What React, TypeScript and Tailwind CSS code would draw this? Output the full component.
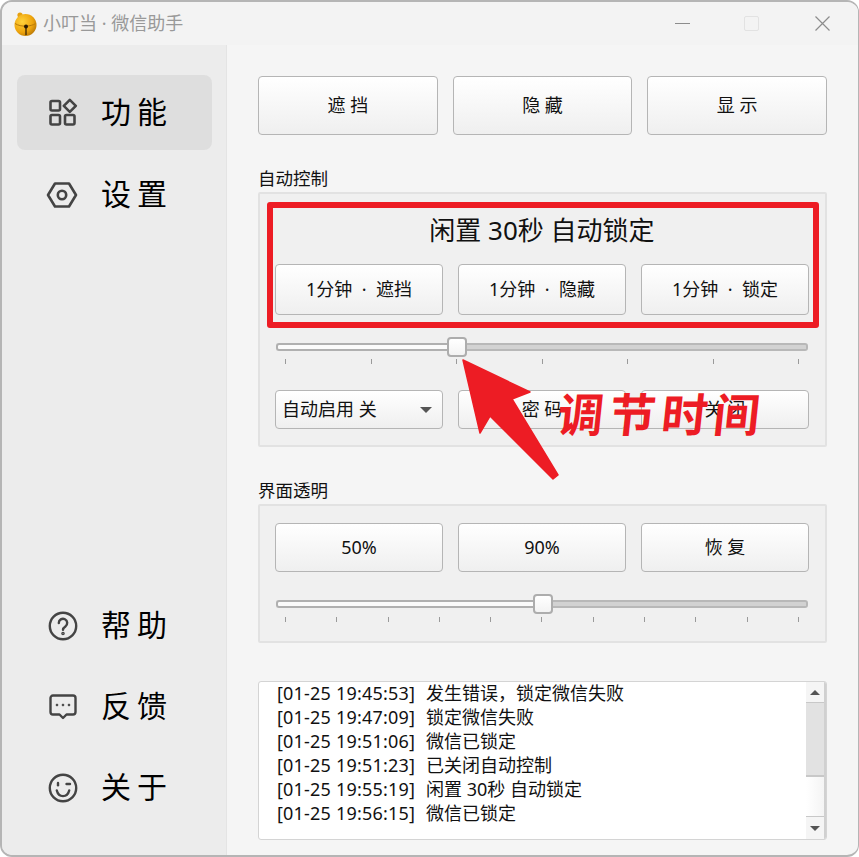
import type { ReactNode } from "react";

const FONT = "font-['Noto_Sans','Noto_Sans_CJK_SC',sans-serif]";

function GridIcon() {
  return (
    <svg width="30" height="30" viewBox="0 0 30 30" fill="none" stroke="#444" strokeWidth="2.6" strokeLinejoin="round">
      <rect x="2.5" y="3" width="9.5" height="9.5" rx="1.5" />
      <rect x="2.5" y="17" width="9.5" height="9.5" rx="1.5" />
      <rect x="17" y="17" width="9.5" height="9.5" rx="1.5" />
      <path d="M21.8 1.8 27.8 7.8 21.8 13.8 15.8 7.8Z" />
    </svg>
  );
}

function HexIcon() {
  return (
    <svg width="32" height="30" viewBox="0 0 32 30" fill="none" stroke="#444" strokeWidth="2.6" strokeLinejoin="round" className="-ml-[2px]">
      <path d="M9 3.5H23L30 15 23 26.5H9L2 15Z" />
      <circle cx="16" cy="15" r="4.2" />
    </svg>
  );
}

function HelpIcon() {
  return (
    <svg width="30" height="30" viewBox="0 0 30 30" fill="none" stroke="#444" strokeWidth="2.4" strokeLinecap="round">
      <circle cx="15" cy="15" r="13.2" />
      <path d="M10.8 12a4.2 4.2 0 1 1 6.6 3.4c-1.5 1-2.4 1.7-2.4 3.4" />
      <circle cx="15" cy="22.5" r="0.6" fill="#444" />
    </svg>
  );
}

function ChatIcon() {
  return (
    <svg width="30" height="30" viewBox="0 0 30 30" fill="none" stroke="#444" strokeWidth="2.4" strokeLinejoin="round">
      <path d="M5 3.5H25a2.5 2.5 0 0 1 2.5 2.5V20a2.5 2.5 0 0 1-2.5 2.5H18.5L15 26l-3.5-3.5H5A2.5 2.5 0 0 1 2.5 20V6A2.5 2.5 0 0 1 5 3.5Z" />
      <circle cx="9" cy="13" r="0.9" fill="#444" strokeWidth="1" />
      <circle cx="15" cy="13" r="0.9" fill="#444" strokeWidth="1" />
      <circle cx="21" cy="13" r="0.9" fill="#444" strokeWidth="1" />
    </svg>
  );
}

function SmileIcon() {
  return (
    <svg width="30" height="30" viewBox="0 0 30 30" fill="none" stroke="#444" strokeWidth="2.4" strokeLinecap="round">
      <circle cx="15" cy="15" r="13.2" />
      <path d="M10 10v2.2" />
      <path d="M18.5 11h3.5" />
      <path d="M8.8 17.5c1 4 3.6 5.6 6.2 5.6s5.2-1.6 6.2-5.6" />
    </svg>
  );
}

function Bell() {
  return (
    <svg width="24" height="26" viewBox="0 0 24 26">
      <defs>
        <radialGradient id="bell" cx="0.35" cy="0.35" r="0.8">
          <stop offset="0" stopColor="#ffd23c" />
          <stop offset="0.6" stopColor="#eea40c" />
          <stop offset="1" stopColor="#a86a05" />
        </radialGradient>
      </defs>
      <circle cx="7" cy="4" r="2.6" fill="#e6a010" />
      <circle cx="12.5" cy="14" r="11" fill="url(#bell)" />
      <path d="M2 12.5c3 2 7 2.8 11 2.6s7-1 9.4-2.4" fill="none" stroke="#b87a08" strokeWidth="1" />
      <circle cx="13" cy="15.5" r="2" fill="#2a1a05" />
      <path d="M13 16v8" stroke="#2a1a05" strokeWidth="1.2" />
    </svg>
  );
}

function NavItem({ icon, label, active }: { icon: ReactNode; label: string; active?: boolean }) {
  return (
    <div className={"flex h-[75px] items-center rounded-lg pl-[31px] " + (active ? "bg-[#dedede]" : "")}>
      <div className="flex w-[53px] shrink-0 items-center">{icon}</div>
      <span className="-mt-[2px] text-[30px] tracking-[6px] text-black">{label}</span>
    </div>
  );
}

function Btn({ children, className }: { children: ReactNode; className: string }) {
  return (
    <div
      className={
        "flex items-center justify-center rounded border-[1.5px] border-[#b5b5b5] bg-gradient-to-b from-white to-[#efefef] text-[18px] text-[#111] " +
        className
      }
    >
      <span className="-mt-px">{children}</span>
    </div>
  );
}

function Slider({ filled, ticks, tickGap }: { filled: number; ticks: number; tickGap: string }) {
  return (
    <div>
      <div className="flex h-5 items-center pl-px pr-px">
        <div className="h-[8px] rounded-l-[3px] border-2 border-r-0 border-[#b0b0b0] bg-[#fbfbfb]" style={{ width: filled }} />
        <div className="z-10 h-5 w-5 shrink-0 rounded-[4px] border-2 border-[#adadad] bg-gradient-to-b from-white to-[#f3f3f3]" />
        <div className="h-[8px] flex-1 rounded-r-[3px] border-2 border-l-0 border-[#b8b8b8] bg-[#d2d2d2]" />
      </div>
      <div className={"flex justify-between px-[10px] " + tickGap}>
        {Array.from({ length: ticks }).map((_, i) => (
          <div key={i} className="h-[5px] w-px bg-[#9a9a9a]" />
        ))}
      </div>
    </div>
  );
}

const logs = [
  ["[01-25 19:45:53]", "发生错误，锁定微信失败"],
  ["[01-25 19:47:09]", "锁定微信失败"],
  ["[01-25 19:51:06]", "微信已锁定"],
  ["[01-25 19:51:23]", "已关闭自动控制"],
  ["[01-25 19:55:19]", "闲置 30秒 自动锁定"],
  ["[01-25 19:56:15]", "微信已锁定"],
];

export default function App() {
  return (
    <div className={"relative h-[857px] w-[859px] overflow-hidden bg-white " + FONT}>
      <div className="flex h-full flex-col overflow-hidden rounded-[12px] border-2 border-r border-[#b5b5b5] bg-[#f5f5f5]">
        {/* title bar */}
        <div className="flex h-[43px] shrink-0 items-center bg-[#f3f3f3] pl-[11px]">
          <Bell />
          <span className="-mt-px ml-[6px] text-[18px] text-[#999]">小叮当 · 微信助手</span>
          <div className="ml-auto flex items-center pr-[28px]">
            <div className="h-px w-[15px] bg-[#8c8c8c]" />
            <div className="ml-[54px] h-[15px] w-[15px] rounded-[2px] border border-[#e2e2e2]" />
            <svg className="ml-[56px]" width="15" height="15" viewBox="0 0 15 15" stroke="#8c8c8c" strokeWidth="1.2">
              <path d="M0.5 0.5 14.5 14.5M14.5 0.5 0.5 14.5" />
            </svg>
          </div>
        </div>

        <div className="flex min-h-0 flex-1">
          {/* sidebar */}
          <div className="flex w-[225px] shrink-0 flex-col justify-between border-r border-[#e4e4e4] bg-[#ececec] pb-[30px] pl-[15px] pr-[14px] pt-[30px]">
            <div className="flex flex-col gap-[7px]">
              <NavItem active icon={<GridIcon />} label="功能" />
              <NavItem icon={<HexIcon />} label="设置" />
            </div>
            <div className="flex flex-col gap-[6px]">
              <NavItem icon={<HelpIcon />} label="帮助" />
              <NavItem icon={<ChatIcon />} label="反馈" />
              <NavItem icon={<SmileIcon />} label="关于" />
            </div>
          </div>

          {/* main */}
          <div className="flex flex-1 flex-col pl-[31px] pr-[31px] pt-[31px]">
            <div className="grid grid-cols-3 gap-[15px]">
              <Btn className="h-[59px]">遮 挡</Btn>
              <Btn className="h-[59px]">隐 藏</Btn>
              <Btn className="h-[59px]">显 示</Btn>
            </div>

            <div className="mt-[30px] h-[27px] text-[17.5px] leading-[27px] text-[#111]">自动控制</div>
            <div className="h-[255px] rounded-[2px] border-2 border-[#e2e2e2] bg-[#f0f0f0] pl-[15px] pr-[16px]">
              <div className="flex h-[70px] items-center justify-center pt-[2px] text-[26px] text-[#111]">闲置 30秒 自动锁定</div>
              <div className="grid grid-cols-3 gap-[15px]">
                <Btn className="h-[51px]">1分钟 &nbsp;·&nbsp; 遮挡</Btn>
                <Btn className="h-[51px]">1分钟 &nbsp;·&nbsp; 隐藏</Btn>
                <Btn className="h-[51px]">1分钟 &nbsp;·&nbsp; 锁定</Btn>
              </div>
              <div className="mt-[22px]">
                <Slider filled={171} ticks={7} tickGap="mt-[2px]" />
              </div>
              <div className="mt-[26px] grid grid-cols-3 gap-[15px]">
                <div className="flex h-[39px] items-center justify-between rounded border-[1.5px] border-[#b5b5b5] bg-gradient-to-b from-white to-[#efefef] pl-[6px] pr-[10px] text-[18px] text-[#111]">
                  <span className="-mt-px">自动启用 关</span>
                  <div className="h-0 w-0 border-x-[6px] border-t-[6px] border-x-transparent border-t-[#555]" />
                </div>
                <Btn className="h-[39px]">密 码</Btn>
                <Btn className="h-[39px]">关 闭</Btn>
              </div>
            </div>

            <div className="mt-[30px] h-[27px] text-[17.5px] leading-[27px] text-[#111]">界面透明</div>
            <div className="h-[139px] rounded-[2px] border-2 border-[#e2e2e2] bg-[#f0f0f0] pl-[15px] pr-[16px] pt-[17px]">
              <div className="grid grid-cols-3 gap-[15px]">
                <Btn className="h-[49px]">50%</Btn>
                <Btn className="h-[49px]">90%</Btn>
                <Btn className="h-[49px]">恢 复</Btn>
              </div>
              <div className="mt-[22px]">
                <Slider filled={257} ticks={11} tickGap="mt-[3px]" />
              </div>
            </div>

            {/* log */}
            <div className="mt-[38px] flex h-[159px] overflow-hidden rounded-[3px] border-[1.5px] border-[#d4d4d4] bg-white">
              <div className="-mt-px flex-1 pl-[18px] text-[18px] leading-[24px] tracking-[0.2px] text-[#111]">
                {logs.map(([t, m]) => (
                  <div key={t + m} className="flex">
                    <span className="w-[149px] shrink-0">{t}</span>
                    <span className="tracking-normal">{m}</span>
                  </div>
                ))}
              </div>
              <div className="flex w-[20px] shrink-0 flex-col border-r-2 border-[#d0d0d0]">
                <div className="flex h-[21px] items-center justify-center border-b border-[#c8c8c8] bg-[#f5f5f5]">
                  <div className="h-0 w-0 border-x-[5px] border-b-[5px] border-x-transparent border-b-[#555]" />
                </div>
                <div className="h-[74px] border-b-2 border-[#c8c8c8] bg-[#e2e2e2]" />
                <div className="flex-1 bg-gradient-to-r from-white to-[#f4f4f4]" />
                <div className="flex h-[23px] items-center justify-center border-t border-[#c8c8c8] bg-[#f5f5f5]">
                  <div className="h-0 w-0 border-x-[5px] border-t-[5px] border-x-transparent border-t-[#555]" />
                </div>
              </div>
            </div>
          </div>
        </div>
      </div>

      {/* red annotations over the screenshot */}
      <div className="absolute left-[267px] top-[202px] h-[126px] w-[552px] rounded-[3px] border-[6px] border-[#ed1c24]" />
      <svg className="absolute left-[460px] top-[355px]" width="105" height="130" viewBox="460 355 105 130">
        <path
          d="M463 360 530 392 512 399 558 475 553 479 490 416 480 433Z"
          fill="#ed1c24"
          stroke="#ed1c24"
          strokeWidth="1.5"
          strokeLinejoin="round"
        />
      </svg>
      <div className="absolute left-[558px] top-[384px] skew-x-[-6deg] text-[46px] font-bold leading-[60px] tracking-[6px] text-[#ed1c24]">
        调节时间
      </div>
    </div>
  );
}
